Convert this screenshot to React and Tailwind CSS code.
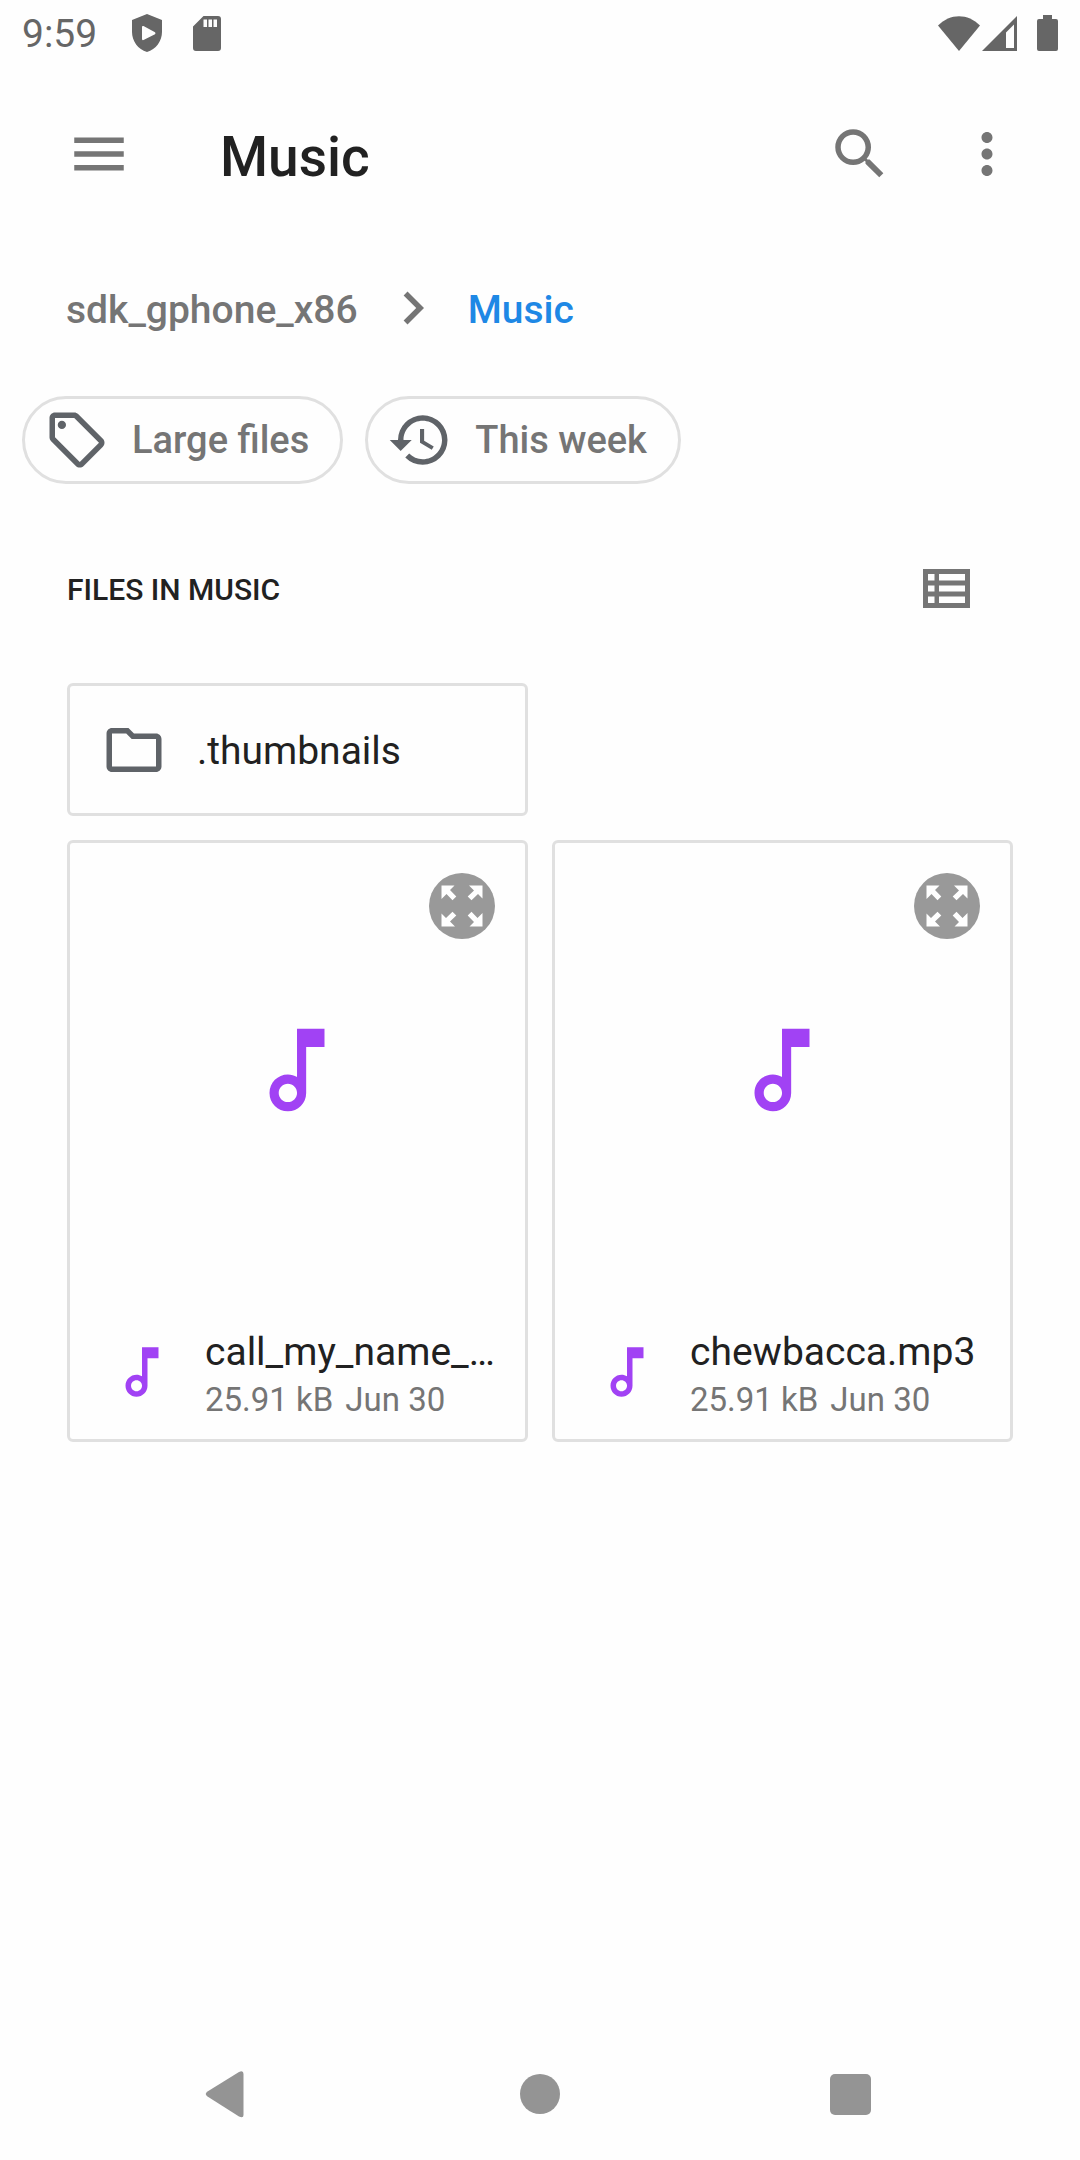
const files = [
  { name: "call_my_name_…", size: "25.91 kB", date: "Jun 30" },
  { name: "chewbacca.mp3", size: "25.91 kB", date: "Jun 30" },
];

function Icon({ path, className = "size-[66px]" }) {
  return (
    <svg viewBox="0 0 24 24" fill="currentColor" aria-hidden="true" className={`shrink-0 ${className}`}>
      <path fillRule="evenodd" d={path} />
    </svg>
  );
}

const paths = {
  menu: "M3 18h18v-2H3v2zm0-5h18v-2H3v2zm0-7v2h18V6H3z",
  search:
    "M15.5 14h-.79l-.28-.27A6.471 6.471 0 0 0 16 9.5 6.5 6.5 0 1 0 9.5 16c1.61 0 3.09-.59 4.23-1.57l.27.28v.79l5 4.99L20.49 19l-4.99-5zm-6 0C7.01 14 5 11.99 5 9.5S7.01 5 9.5 5 14 7.01 14 9.5 11.99 14 9.5 14z",
  more: "M12 8c1.1 0 2-.9 2-2s-.9-2-2-2-2 .9-2 2 .9 2 2 2zm0 2c-1.1 0-2 .9-2 2s.9 2 2 2 2-.9 2-2-.9-2-2-2zm0 6c-1.1 0-2 .9-2 2s.9 2 2 2 2-.9 2-2-.9-2-2-2z",
  chevron: "M10 6L8.59 7.41 13.17 12l-4.58 4.59L10 18l6-6z",
  tag: "M21.41 11.58l-9-9C12.05 2.22 11.55 2 11 2H4c-1.1 0-2 .9-2 2v7c0 .55.22 1.05.59 1.42l9 9c.36.36.86.58 1.41.58s1.05-.22 1.41-.59l7-7c.37-.36.59-.86.59-1.41s-.23-1.06-.59-1.42zM13 20.01L4 11V4h7v-.01l9 9-7 7.02zM6.5 5a1.5 1.5 0 1 0 0 3 1.5 1.5 0 0 0 0-3z",
  history:
    "M13 3a9 9 0 0 0-9 9H1l3.89 3.89.07.14L9 12H6c0-3.87 3.13-7 7-7s7 3.13 7 7-3.13 7-7 7c-1.93 0-3.68-.79-4.94-2.06l-1.42 1.42A8.954 8.954 0 0 0 13 21a9 9 0 0 0 0-18zm-1 5v5l4.28 2.54.72-1.21-3.5-2.08V8H12z",
  folder:
    "M9.17 6l2 2H20v10H4V6h5.17M10 4H4c-1.1 0-1.99.9-1.99 2L2 18c0 1.1.9 2 2 2h16c1.1 0 2-.9 2-2V8c0-1.1-.9-2-2-2h-8l-2-2z",
  note: "M12 3l.01 10.55c-.59-.34-1.27-.55-2-.55C7.79 13 6 14.79 6 17s1.79 4 4.01 4S14 19.21 14 17V7h4V3h-6zm-1.99 16c-1.1 0-2-.9-2-2s.9-2 2-2 2 .9 2 2-.9 2-2 2z",
};

function ShieldIcon() {
  return (
    <svg viewBox="0 0 32 38" className="h-[38px] w-8" fill="currentColor" aria-hidden="true">
      <path
        fillRule="evenodd"
        d="M16 0L31 6V18C31 27 25 35.500 16 38C7 35.500 1 27 1 18V6ZM12.500 12Q11 11.500 11 13V25Q11 26.500 12.500 26L24 20.300Q25 19.300 24 18.300Z"
      />
    </svg>
  );
}

function SdIcon() {
  return (
    <svg viewBox="0 0 28 35" className="h-[35px] w-7" fill="currentColor" aria-hidden="true">
      <path
        fillRule="evenodd"
        d="M10.500 0H25a3 3 0 0 1 3 3V32a3 3 0 0 1-3 3H3a3 3 0 0 1-3-3V10.500ZM10.500 3.500V11H14V3.500ZM15.500 3.500V11H19V3.500ZM20.500 3.500V11H24V3.500Z"
      />
    </svg>
  );
}

function StatusBar() {
  return (
    <div className="flex h-[66px] items-center justify-between px-[22px] text-[#666]">
      <div className="flex items-center">
        <span className="pt-0.5 text-[39px] leading-[66px]">9:59</span>
        <span className="ml-[34px]">
          <ShieldIcon />
        </span>
        <span className="ml-[30px]">
          <SdIcon />
        </span>
      </div>
      <div className="flex items-center">
        <svg viewBox="0 0 42 35" className="h-[35px] w-[42px]" fill="currentColor" aria-hidden="true">
          <path d="M0 9.500C12-3 30-3 42 9.500L21 35Z" />
        </svg>
        <svg viewBox="0 0 35 35" className="ml-[2px] size-[35px]" fill="currentColor" aria-hidden="true">
          <path fillRule="evenodd" d="M35 0V35H0ZM32 8.500L24 16.500V32H32Z" />
        </svg>
        <svg viewBox="0 0 21 36" className="ml-5 h-9 w-[21px]" fill="currentColor" aria-hidden="true">
          <path d="M6 0H15V4H19a2 2 0 0 1 2 2V34a2 2 0 0 1-2 2H2a2 2 0 0 1-2-2V6a2 2 0 0 1 2-2H6Z" />
        </svg>
      </div>
    </div>
  );
}

function Chip({ icon, label }) {
  return (
    <button
      type="button"
      className="flex h-[88px] items-center gap-[22px] rounded-full border-3 border-[#e0e0e0] pr-[31px] pl-[19px] text-[38px] font-medium whitespace-nowrap text-[#757575]"
    >
      <Icon path={icon} className="size-[66px] text-[#5f6368]" />
      {label}
    </button>
  );
}

function FileCard({ file }) {
  return (
    <article className="relative min-w-0 rounded-[6px] border-3 border-[#e0e0e0]">
      <div className="flex h-[458px] items-center justify-center pr-0.5 pb-1 text-[#a142f4]">
        <Icon path={paths.note} className="size-[110px]" />
      </div>
      <button
        type="button"
        aria-label={`Preview ${file.name}`}
        className="absolute top-[30px] right-[30px] size-[66px] rounded-full bg-[#999] text-white"
      >
        <svg viewBox="0 0 66 66" fill="currentColor" aria-hidden="true">
          {[0, 90, 180, 270].map((angle) => (
            <path
              key={angle}
              transform={`rotate(${angle} 33 33)`}
              d="M12.500 12.500H25.500L21 17L27.300 23.500L23.500 27.300L17.500 21L12.500 26Z"
            />
          ))}
        </svg>
      </button>
      <div className="flex h-[138px] items-start pr-[30px] pl-[39px]">
        <Icon path={paths.note} className="mt-[38px] size-[66px] text-[#a142f4]" />
        <div className="mt-[26px] ml-[30px] min-w-0 flex-1">
          <h3 className="text-[39px] leading-[50px] whitespace-nowrap text-[#212121]">{file.name}</h3>
          <p className="flex gap-3 text-[33px] leading-[46px] whitespace-nowrap text-[#757575]">
            <span>{file.size}</span>
            <span>{file.date}</span>
          </p>
        </div>
      </div>
    </article>
  );
}

export default function App() {
  return (
    <div className="flex min-h-screen flex-col bg-[#fefefe] font-['Roboto',sans-serif]">
      <StatusBar />
      <header className="flex h-44 items-center pr-[60px] pl-[66px] text-[#757575]">
        <button type="button" aria-label="Open navigation">
          <Icon path={paths.menu} />
        </button>
        <h1 className="ml-[88px] flex-1 pt-1.5 text-[55px] leading-[66px] font-medium text-[#212121]">Music</h1>
        <button type="button" aria-label="Search">
          <Icon path={paths.search} />
        </button>
        <button type="button" aria-label="More options" className="ml-[61px]">
          <Icon path={paths.more} />
        </button>
      </header>
      <nav aria-label="Path" className="flex h-[132px] items-center px-[66px] text-[39px] font-medium text-[#757575]">
        <a href="#root" className="pt-1">
          sdk_gphone_x86
        </a>
        <Icon path={paths.chevron} className="mx-[22px] size-[66px]" />
        <a href="#music" className="pt-1 text-[#1e88e5]">
          Music
        </a>
      </nav>
      <div className="mt-[22px] flex gap-[22px] px-[22px]">
        <Chip icon={paths.tag} label="Large files" />
        <Chip icon={paths.history} label="This week" />
      </div>
      <main className="px-[67px]">
        <div className="mt-[49px] flex h-[110px] items-center justify-between pr-[43px]">
          <h2 className="pt-0.5 text-[30px] font-medium text-[#212121]">FILES IN MUSIC</h2>
          <button type="button" aria-label="List view" className="text-[#757575]">
            <svg viewBox="0 0 47 39" className="h-[39px] w-[47px]" fill="currentColor" aria-hidden="true">
              <path
                fillRule="evenodd"
                d="M0 0H47V39H0ZM5 5V11.500H11.500V5ZM16 5V11.500H42V5ZM5 16.500V22.500H11.500V16.500ZM16 16.500V22.500H42V16.500ZM5 27.500V34H11.500V27.500ZM16 27.500V34H42V27.500Z"
              />
            </svg>
          </button>
        </div>
        <div className="mt-10 grid grid-cols-2 gap-6">
          <button
            type="button"
            className="col-start-1 flex h-[133px] items-center gap-[30px] rounded-[6px] border-3 border-[#e0e0e0] pl-[31px] text-left text-[39px] text-[#212121]"
          >
            <Icon path={paths.folder} className="size-[66px] text-[#5f6368]" />
            <span className="pt-1">.thumbnails</span>
          </button>
          <div />
          {files.map((file) => (
            <FileCard key={file.name} file={file} />
          ))}
        </div>
      </main>
      <nav aria-label="System" className="mt-auto flex h-[132px] items-center justify-center gap-[245px] text-[#949494]">
        <button type="button" aria-label="Back">
          <svg viewBox="0 0 66 66" className="size-[66px]" fill="currentColor" aria-hidden="true">
            <path d="M11.500 35.500Q8 33 11.500 30.500L43 11Q47.500 9 47.500 13V54Q47.500 57.500 43 55.500Z" />
          </svg>
        </button>
        <button type="button" aria-label="Home">
          <svg viewBox="0 0 66 66" className="size-[66px]" fill="currentColor" aria-hidden="true">
            <circle cx="33" cy="33" r="20" />
          </svg>
        </button>
        <button type="button" aria-label="Recent apps">
          <svg viewBox="0 0 66 66" className="size-[66px]" fill="currentColor" aria-hidden="true">
            <rect x="12" y="13" width="41" height="41" rx="5" />
          </svg>
        </button>
      </nav>
    </div>
  );
}
